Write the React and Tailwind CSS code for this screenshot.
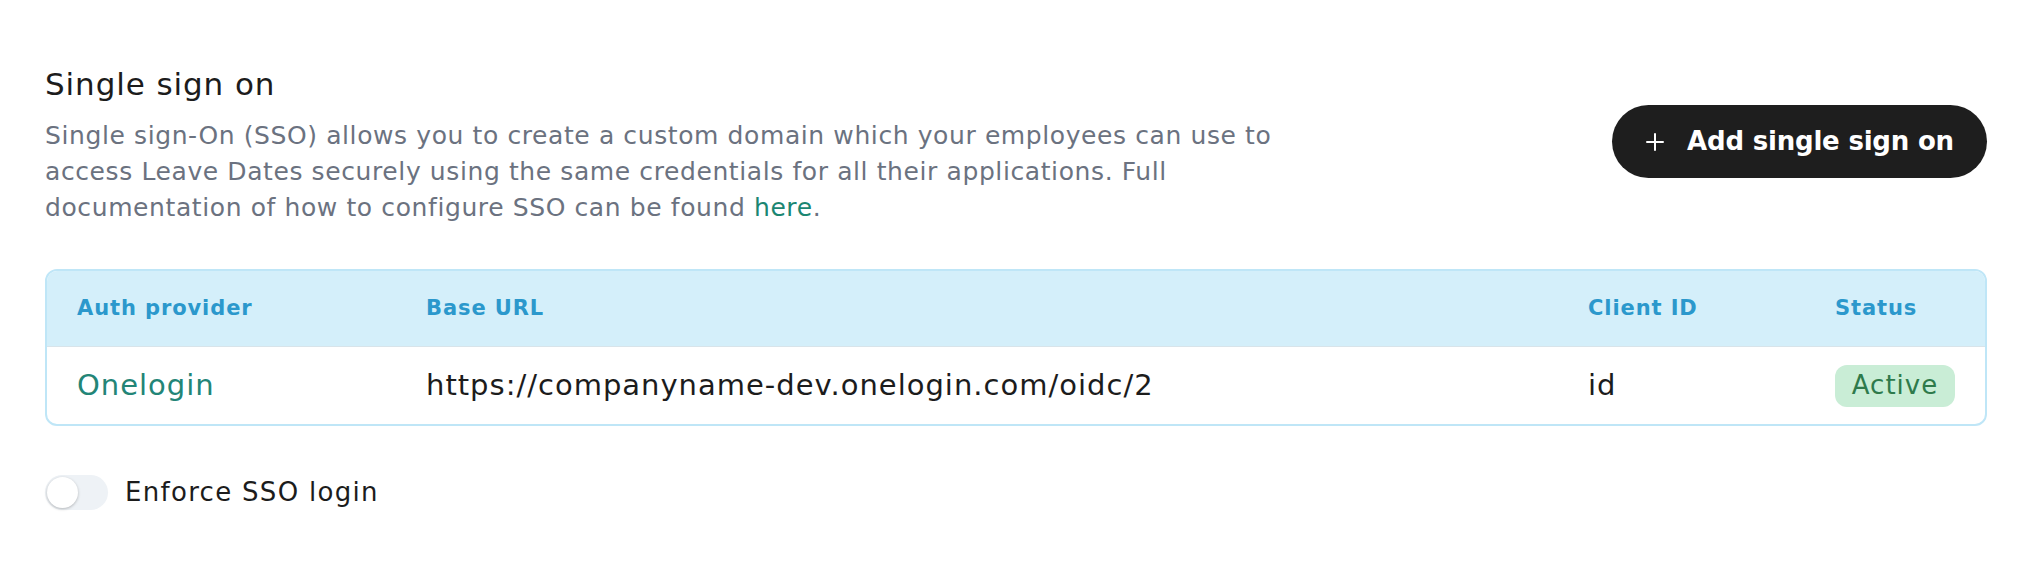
import React, { useState } from 'react';

function PlusIcon() {
  return (
    <svg width="20" height="20" viewBox="0 0 20 20" fill="none" stroke="currentColor" strokeWidth="2" strokeLinecap="round">
      <path d="M10 2v16M2 10h16" />
    </svg>
  );
}

const providers = [
  {
    name: 'Onelogin',
    baseUrl: 'https://companyname-dev.onelogin.com/oidc/2',
    clientId: 'id',
    status: 'Active',
  },
];

export default function App() {
  const [enforced, setEnforced] = useState(false);

  return (
    <div className="min-h-screen bg-white font-['DejaVu_Sans',sans-serif] pl-[45px] pr-[33px] pt-[65px]">
      <div className="flex items-start justify-between">
        <div>
          <h2 className="text-[31px] leading-[38px] tracking-[0.9px] text-[#1c1c1c]">Single sign on</h2>
          <p className="mt-[15px] text-[25px] leading-[36px] tracking-[0.6px] text-[#6b7280]">
            Single sign-On (SSO) allows you to create a custom domain which your employees can use to
            <br />
            access Leave Dates securely using the same credentials for all their applications. Full
            <br />
            documentation of how to configure SSO can be found{' '}
            <a href="#" className="text-[#1b8672]">here</a>.
          </p>
        </div>
        <button className="mt-[40px] flex h-[73px] w-[375px] items-center justify-center gap-[22px] rounded-full bg-[#1e1e1e] text-white">
          <PlusIcon />
          <span className="text-[26px] font-bold tracking-[-0.2px]">Add single sign on</span>
        </button>
      </div>

      <div className="mt-[43px] overflow-hidden rounded-[12px] border-2 border-[#bfe6f7]">
        <div className="grid grid-cols-[349px_1162px_247px_1fr] items-center bg-[#d4effa] px-[30px] h-[76px] border-b border-[#d8e4ea]">
          <span className="text-[21px] font-semibold tracking-[0.9px] text-[#2b98cc]">Auth provider</span>
          <span className="text-[21px] font-semibold tracking-[0.9px] text-[#2b98cc]">Base URL</span>
          <span className="text-[21px] font-semibold tracking-[0.9px] text-[#2b98cc]">Client ID</span>
          <span className="text-[21px] font-semibold tracking-[0.9px] text-[#2b98cc]">Status</span>
        </div>
        {providers.map((p) => (
          <div key={p.name} className="grid grid-cols-[349px_1162px_247px_1fr] items-center px-[30px] h-[77px]">
            <span className="text-[29px] tracking-[1px] text-[#238577]">{p.name}</span>
            <span className="text-[29px] tracking-[1px] text-[#1c1c1c]">{p.baseUrl}</span>
            <span className="text-[29px] tracking-[1px] text-[#1c1c1c]">{p.clientId}</span>
            <span>
              <span className="inline-flex h-[42px] w-[120px] items-center justify-center rounded-[12px] bg-[#c9edd6] text-[26px] tracking-[1px] text-[#2e7a4b]">
                {p.status}
              </span>
            </span>
          </div>
        ))}
      </div>

      <div className="mt-[47px] flex items-center gap-[17px]">
        <button
          onClick={() => setEnforced(!enforced)}
          className={`relative h-[35px] w-[63px] rounded-full ${enforced ? 'bg-[#1b8672]' : 'bg-[#eef2f6]'}`}
        >
          <span
            className={`absolute top-[2px] h-[31px] w-[31px] rounded-full bg-white shadow-[0_1px_3px_rgba(0,0,0,0.25)] ${enforced ? 'left-[30px]' : 'left-[2px]'}`}
          />
        </button>
        <span className="text-[26px] tracking-[1.3px] text-[#1c1c1c]">Enforce SSO login</span>
      </div>
    </div>
  );
}
